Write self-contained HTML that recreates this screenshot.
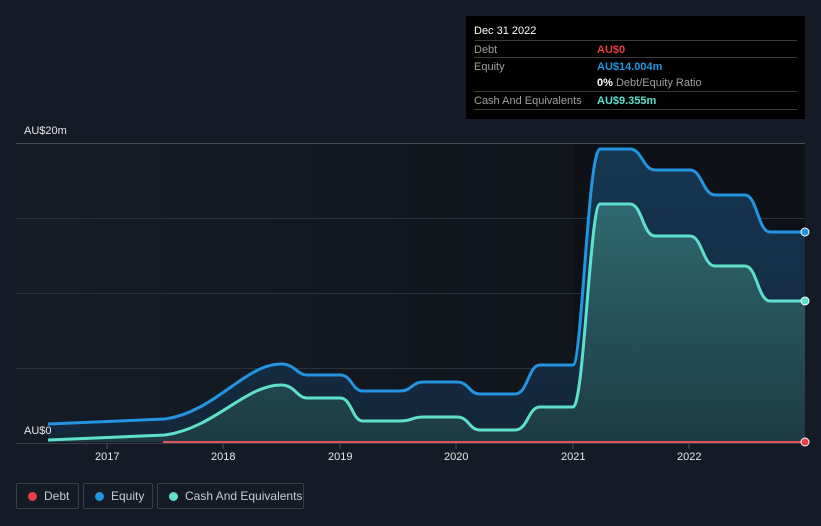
<!DOCTYPE html>
<html><head><meta charset="utf-8"><style>
html,body{margin:0;padding:0;background:#151b26;}
body{width:821px;height:526px;position:relative;overflow:hidden;font-family:"Liberation Sans",sans-serif;}
.tip{position:absolute;left:466px;top:16px;width:339px;height:103px;background:#000;color:#fff;font-size:11px;}
.tip .row{position:absolute;left:8px;right:8px;border-top:1px solid #3a3a3a;height:17px;}
.tip .l{position:absolute;left:0;top:3px;color:#a0a0a0;}
.tip .v{position:absolute;left:123px;top:3px;font-weight:bold;}
.leg{position:absolute;top:483px;height:26px;border:1px solid #3a4049;border-radius:2px;color:#c8cbd0;font-size:12px;box-sizing:border-box;}
.leg i{position:absolute;left:11px;top:8px;width:9px;height:9px;border-radius:50%;}
.leg span{position:absolute;top:5px;}
.ax{position:absolute;color:#e6e6e6;font-size:11px;}
</style></head><body>
<svg width="821" height="526" style="position:absolute;left:0;top:0">
<defs>
<linearGradient id="bg" x1="0" x2="1" y1="0" y2="0">
<stop offset="0" stop-color="#161c26"/><stop offset="1" stop-color="#0f1218"/></linearGradient>
<linearGradient id="eq" x1="0" x2="0" y1="0" y2="1"><stop offset="0" stop-color="#163650"/><stop offset="1" stop-color="#14263a"/></linearGradient>
<linearGradient id="ca" x1="0" x2="0" y1="0" y2="1"><stop offset="0" stop-color="#2f6870"/><stop offset="1" stop-color="#1e3a44"/></linearGradient>
</defs>
<rect x="16" y="143" width="789" height="300" fill="url(#bg)"/>
<rect x="573" y="143" width="232" height="300" fill="#0e1116"/>
<g stroke="#3a3f48" stroke-width="1">
<line x1="16" y1="143.5" x2="805" y2="143.5" stroke="#4a4f58"/>
<line x1="16" y1="218.5" x2="805" y2="218.5" stroke="#2c323b"/>
<line x1="16" y1="293.5" x2="805" y2="293.5" stroke="#2c323b"/>
<line x1="16" y1="368.5" x2="805" y2="368.5" stroke="#2c323b"/>
</g>
<path id="eqa" fill="url(#eq)" d="M48,424 L165,419 C215,412 245,364 281,364 C295,364 297,375 307,375 L340,375 C352,375 352,391 363,391 L400,391 C412,391 412,382 423,382 L457,382 C469,382 469,394 480,394 L515,394 C528,394 528,365 540,365 L573,365 C582,365 588,149 600,149 L630,149 C642,149 643,170 655,170 L690,170 C702,170 703,195 715,195 L745,195 C757,195 758,232 770,232 L805,232 L805,442 L48,442 Z"/>
<path fill="url(#ca)" d="M48,440 L165,435 C215,428 245,385 281,385 C295,385 297,398 307,398 L340,398 C352,398 352,421 363,421 L400,421 C412,421 412,417 423,417 L457,417 C469,417 469,430 480,430 L515,430 C528,430 528,407 540,407 L573,407 C584,407 590,204 600,204 L630,204 C642,204 643,236 655,236 L690,236 C702,236 703,266 715,266 L745,266 C757,266 758,301 770,301 L805,301 L805,442 L48,442 Z"/>
<path fill="none" stroke="#2394e0" stroke-width="3" d="M48,424 L165,419 C215,412 245,364 281,364 C295,364 297,375 307,375 L340,375 C352,375 352,391 363,391 L400,391 C412,391 412,382 423,382 L457,382 C469,382 469,394 480,394 L515,394 C528,394 528,365 540,365 L573,365 C582,365 588,149 600,149 L630,149 C642,149 643,170 655,170 L690,170 C702,170 703,195 715,195 L745,195 C757,195 758,232 770,232 L805,232"/>
<path fill="none" stroke="#5ee0cc" stroke-width="3" d="M48,440 L165,435 C215,428 245,385 281,385 C295,385 297,398 307,398 L340,398 C352,398 352,421 363,421 L400,421 C412,421 412,417 423,417 L457,417 C469,417 469,430 480,430 L515,430 C528,430 528,407 540,407 L573,407 C584,407 590,204 600,204 L630,204 C642,204 643,236 655,236 L690,236 C702,236 703,266 715,266 L745,266 C757,266 758,301 770,301 L805,301"/>
<line x1="163" y1="442" x2="805" y2="442" stroke="#e0555a" stroke-width="2"/>
<line x1="16" y1="443.5" x2="805" y2="443.5" stroke="#3a3f48"/>
<g stroke="#4a4f58"><line x1="107" y1="444" x2="107" y2="449"/><line x1="223" y1="444" x2="223" y2="449"/><line x1="340" y1="444" x2="340" y2="449"/><line x1="456" y1="444" x2="456" y2="449"/><line x1="573" y1="444" x2="573" y2="449"/><line x1="689" y1="444" x2="689" y2="449"/></g>
<circle cx="805" cy="232" r="4" fill="#2394e0" stroke="#fff" stroke-width="1"/>
<circle cx="805" cy="301" r="4" fill="#5ee0cc" stroke="#fff" stroke-width="1"/>
<circle cx="805" cy="442" r="4" fill="#e84045" stroke="#fff" stroke-width="1"/>
</svg>
<div class="ax" style="left:24px;top:125px">AU$20m</div>
<div class="ax" style="left:24px;top:425px">AU$0</div>
<div class="ax" style="left:95px;top:451px">2017</div>
<div class="ax" style="left:211px;top:451px">2018</div>
<div class="ax" style="left:328px;top:451px">2019</div>
<div class="ax" style="left:444px;top:451px">2020</div>
<div class="ax" style="left:561px;top:451px">2021</div>
<div class="ax" style="left:677px;top:451px">2022</div>
<div class="tip">
<div style="position:absolute;left:8px;top:9px;">Dec 31 2022</div>
<div class="row" style="top:24px"><span class="l">Debt</span><span class="v" style="color:#e84045">AU$0</span></div>
<div class="row" style="top:41px"><span class="l">Equity</span><span class="v" style="color:#2394e0">AU$14.004m</span></div>
<div class="row" style="top:58px;border-top:none"><span class="v" style="color:#fff">0% <span style="color:#a0a0a0;font-weight:normal">Debt/Equity Ratio</span></span></div>
<div class="row" style="top:75px;border-bottom:1px solid #3a3a3a"><span class="l">Cash And Equivalents</span><span class="v" style="color:#5ee0cc">AU$9.355m</span></div>
</div>
<div class="leg" style="left:16px;width:63px"><i style="background:#e84045"></i><span style="left:27px">Debt</span></div>
<div class="leg" style="left:83px;width:70px"><i style="background:#2394e0"></i><span style="left:27px">Equity</span></div>
<div class="leg" style="left:157px;width:147px"><i style="background:#5ee0cc"></i><span style="left:27px">Cash And Equivalents</span></div>
</body></html>
